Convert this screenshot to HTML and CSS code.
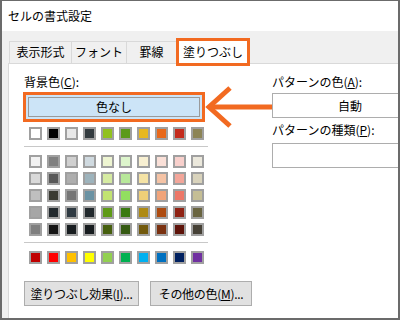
FILE: index.html
```
<!DOCTYPE html>
<html lang="ja">
<head>
    <meta charset="UTF-8">
    <title>セルの書式設定</title>
    <link rel="stylesheet" href="styles.css">
</head>
<body>
    <div class="dialog">
        <div class="title-bar">セルの書式設定</div>
        <div class="tabs">
            <div class="tab" style="width: 63px">表示形式</div>
            <div class="tab" style="width: 55px">フォント</div>
            <div class="tab" style="width: 50px">罫線</div>
            <div class="tab active" style="width: 73px">塗りつぶし</div>
        </div>
        <div class="panel">
            <div class="left-col">
                <div class="label">背景色(<u>C</u>):</div>
                <div class="no-color-wrap">
                    <div class="no-color">色なし</div>
                </div>
                <div class="swatch-row" id="theme-row"></div>
                <div class="separator"></div>
                <div class="swatch-grid" id="tint-grid"></div>
                <div class="separator"></div>
                <div class="swatch-row" id="standard-row"></div>
                <div class="buttons">
                    <button class="btn btn-effects">塗りつぶし効果(<u>I</u>)...</button>
                    <button class="btn btn-more">その他の色(<u>M</u>)...</button>
                </div>
            </div>
            <div class="right-col">
                <div class="label">パターンの色(<u>A</u>):</div>
                <div class="combo">自動</div>
                <div class="label label-second">パターンの種類(<u>P</u>):</div>
                <div class="combo combo-second"></div>
            </div>
        </div>
    </div>

    <svg class="arrow" width="70" height="45" viewBox="0 0 70 45">
        <polyline points="25,3 4,22 25,41" fill="none" stroke="#f26a21" stroke-width="5"/>
        <line x1="6" y1="22" x2="67" y2="22" stroke="#f26a21" stroke-width="5"/>
    </svg>

    <script>
        const themeColors = ['#ffffff', '#000000', '#e8e8e8', '#333b3f', '#91c11e', '#5b9a1b', '#e8b820', '#e8681a', '#c42b1c', '#8c8456'];
        const tintColors = [
            ['#f2f2f2', '#808080', '#d0d0d0', '#d0dae0', '#eef5d2', '#ddf5cc', '#f8f0d2', '#fae0d8', '#f8d0cc', '#ebe8dc'],
            ['#d9d9d9', '#595959', '#aeaeae', '#9db3bc', '#d6eba2', '#b8e89a', '#f5e3a5', '#f5c3a5', '#f3a69a', '#d9d3bc'],
            ['#bfbfbf', '#3b3b33', '#767676', '#6a92a3', '#c2e371', '#92df5f', '#efcf78', '#f1a47a', '#ed7767', '#c5be95'],
            ['#a6a6a6', '#22292d', '#2f3a42', '#22292d', '#5e9a16', '#3a7a10', '#ae8a14', '#ad4b10', '#8f2213', '#696440'],
            ['#7f7f7f', '#151515', '#181d20', '#181d20', '#465f0e', '#355a12', '#735a0d', '#7a3110', '#5e130a', '#464136']
        ];
        const standardColors = ['#c00000', '#ff0000', '#ffc000', '#ffff00', '#92d050', '#00b050', '#00b0f0', '#0070c0', '#002060', '#7030a0'];

        function addSwatches(container, colors) {
            colors.forEach(color => {
                const swatch = document.createElement('div');
                swatch.className = 'swatch';
                swatch.style.background = color;
                container.appendChild(swatch);
            });
        }

        addSwatches(document.getElementById('theme-row'), themeColors);
        const grid = document.getElementById('tint-grid');
        tintColors.forEach(row => addSwatches(grid, row));
        addSwatches(document.getElementById('standard-row'), standardColors);
    </script>
</body>
</html>
```

FILE: styles.css
```
body {
    margin: 0;
    width: 400px;
    height: 320px;
    overflow: hidden;
    position: relative;
    font-family: "Noto Sans CJK JP", "Noto Sans", sans-serif;
    font-size: 12px;
    color: #000;
}
.dialog {
    box-sizing: border-box;
    width: 400px;
    height: 320px;
    border: 2px solid #6b6b6b;
    border-top-width: 1px;
    background-color: #f0f0f0;
    overflow: hidden;
    display: flex;
    flex-direction: column;
}
.title-bar {
    height: 30px;
    line-height: 30px;
    padding-left: 6px;
    background-color: #fff;
}
.tabs {
    display: flex;
    height: 22px;
    padding: 10px 0 0 7px;
}
.tab {
    box-sizing: border-box;
    height: 22px;
    line-height: 20px;
    text-align: center;
    border: 1px solid #d9d9d9;
    border-bottom: none;
    border-left: none;
    background-color: #f0f0f0;
}
.tab:first-child {
    border-left: 1px solid #d9d9d9;
}
.tab.active {
    position: relative;
    height: 25px;
    margin-top: -3px;
    line-height: 26px;
    background-color: #fff;
    z-index: 1;
}
.tab.active::after {
    content: "";
    position: absolute;
    left: -1px;
    top: -1px;
    right: -1px;
    bottom: -3px;
    border: 3px solid #f26a21;
}
.panel {
    flex: 1;
    display: flex;
    margin-left: 6px;
    padding-top: 10px;
    background-color: #fff;
    border-top: 1px solid #d9d9d9;
    border-left: 1px solid #d9d9d9;
}
.left-col {
    flex-shrink: 0;
    width: 184px;
    margin-left: 15px;
}
.right-col {
    flex-shrink: 0;
    width: 156px;
    margin-left: 64px;
}
.label {
    height: 16px;
    line-height: 16px;
    white-space: nowrap;
}
.no-color-wrap {
    box-sizing: border-box;
    width: 182px;
    height: 30px;
    margin: 2px 0 0 -1px;
    padding: 2px;
    border: 3px solid #f26a21;
    background-color: #cce4f7;
}
.no-color {
    box-sizing: border-box;
    height: 20px;
    line-height: 18px;
    text-align: center;
    border: 1px solid #9a9a9a;
}
.swatch-row {
    display: flex;
    gap: 5px;
    padding-left: 5px;
    margin-top: 5px;
}
.swatch-grid {
    display: grid;
    grid-template-columns: repeat(10, 13px);
    gap: 4px 5px;
    padding-left: 5px;
    margin-top: 8px;
}
.swatch {
    box-sizing: border-box;
    width: 13px;
    height: 13px;
    border: 2px solid #a0a0a0;
}
.separator {
    height: 1px;
    margin-top: 6px;
    background-color: #c8c8c8;
}
#standard-row {
    margin-top: 8px;
}
.buttons {
    display: flex;
    gap: 11px;
    margin-top: 17px;
}
.btn {
    box-sizing: border-box;
    flex-shrink: 0;
    height: 25px;
    padding: 0;
    font-family: inherit;
    font-size: 12px;
    letter-spacing: -0.3px;
    white-space: nowrap;
    color: #000;
    background-color: #e1e1e1;
    border: 1px solid #adadad;
}
.btn-effects {
    width: 115px;
}
.btn-more {
    width: 102px;
}
.combo {
    box-sizing: border-box;
    height: 25px;
    margin-top: 3px;
    line-height: 23px;
    text-align: center;
    background-color: #fff;
    border: 1px solid #adadad;
}
.label-second {
    margin-top: 4px;
}
.combo-second {
    margin-top: 5px;
}
.arrow {
    position: absolute;
    left: 205px;
    top: 85px;
}
```
